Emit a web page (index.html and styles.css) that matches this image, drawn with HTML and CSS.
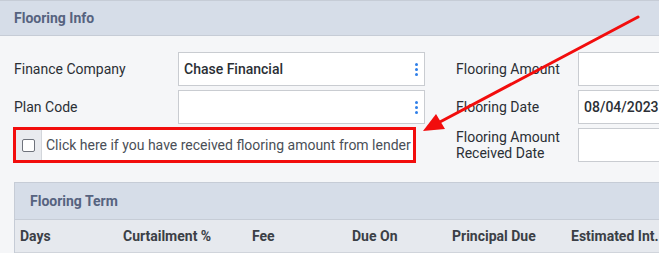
FILE: index.html
```html
<!DOCTYPE html>
<html lang="en">
<head>
    <meta charset="UTF-8">
    <meta name="viewport" content="width=device-width, initial-scale=1.0">
    <title>Flooring Info</title>
    <link rel="stylesheet" href="styles.css">
</head>
<body>
    <div class="page">
        <div class="panel-head">Flooring Info</div>

        <div class="form-grid">
            <label class="field-label">Finance Company</label>
            <div class="select-box">
                <span class="select-value">Chase Financial</span>
                <span class="kebab"><i></i><i></i><i></i></span>
            </div>
            <label class="field-label right">Flooring Amount</label>
            <div class="text-box"></div>

            <label class="field-label">Plan Code</label>
            <div class="select-box">
                <span class="select-value"></span>
                <span class="kebab"><i></i><i></i><i></i></span>
            </div>
            <label class="field-label right">Flooring Date</label>
            <div class="text-box">08/04/2023</div>

            <div class="check-row">
                <span class="check-addon"><span class="checkbox"></span></span>
                <span class="check-text">Click here if you have received flooring amount from lender</span>
            </div>
            <label class="field-label right two-line">Flooring Amount<br>Received Date</label>
            <div class="text-box"></div>
        </div>

        <div class="term-box">
            <div class="term-head">Flooring Term</div>
            <div class="term-cols">
                <span>Days</span>
                <span>Curtailment %</span>
                <span>Fee</span>
                <span>Due On</span>
                <span>Principal Due</span>
                <span>Estimated Int.</span>
            </div>
        </div>

        <!-- annotation arrow drawn over the form -->
        <svg class="arrow" width="659" height="253" viewBox="0 0 659 253">
            <line x1="638" y1="17" x2="438" y2="123" stroke="#f20d0d" stroke-width="3" stroke-linecap="round"/>
            <polygon points="423,131 436,114 445,129" fill="#f20d0d"/>
        </svg>
    </div>
</body>
</html>
```

FILE: styles.css
```css
body {
    margin: 0;
    background-color: #f5f6f8;
    font-family: Roboto, "Liberation Sans", Arial, sans-serif;
    color: #2e3238;
    overflow: hidden;
}
.page {
    position: relative;
    width: 659px;
    height: 253px;
    overflow: hidden;
}
.panel-head {
    height: 36px;
    box-sizing: border-box;
    border-top: 1px solid #c6ccd6;
    border-bottom: 1px solid #c6ccd6;
    background-color: #d6dde8;
    padding-left: 14px;
    line-height: 34px;
    font-size: 14px;
    font-weight: 700;
    color: #56637f;
}
.form-grid {
    display: grid;
    grid-template-columns: 164px 247px 153px 110px;
    grid-auto-rows: 34px;
    row-gap: 4px;
    align-items: center;
    padding: 16px 0 0 14px;
}
.field-label {
    font-size: 14px;
    color: #2b2f35;
}
.field-label.right {
    padding-left: 31px;
}
.two-line {
    line-height: 16px;
}
.select-box, .text-box {
    height: 34px;
    box-sizing: border-box;
    border: 1px solid #c9ccd1;
    background: #fff;
    display: flex;
    align-items: center;
    font-size: 14px;
    font-weight: 500;
    color: #2b2f35;
}
.select-box {
    justify-content: space-between;
    padding: 0 6px 0 5px;
}
.text-box {
    padding-left: 5px;
}
.kebab {
    display: flex;
    flex-direction: column;
    gap: 2px;
}
.kebab i {
    width: 3px;
    height: 3px;
    border-radius: 50%;
    background: #2f7fe8;
}
.check-row {
    grid-column: 1 / 3;
    align-self: start;
    width: 403px;
    height: 36px;
    margin-left: -1px;
    margin-top: -1px;
    box-sizing: border-box;
    border: 3px solid #f20d0d;
    display: flex;
    background: #fff;
}
.check-addon {
    width: 25px;
    background: #e9ebef;
    border-right: 1px solid #d3d6db;
    display: flex;
    align-items: center;
    justify-content: center;
}
.checkbox {
    width: 11px;
    height: 11px;
    border: 1.5px solid #6f737c;
    border-radius: 2px;
    background: #fff;
}
.check-text {
    padding-left: 4px;
    font-size: 14px;
    line-height: 30px;
    color: #4a4f57;
    white-space: nowrap;
}
.term-box {
    margin: 20px 0 0 14px;
    border-left: 1px solid #c6ccd6;
    border-top: 1px solid #c6ccd6;
}
.term-head {
    height: 37px;
    box-sizing: border-box;
    border-bottom: 1px solid #c6ccd6;
    background-color: #d6dde8;
    padding-left: 15px;
    line-height: 36px;
    font-size: 14px;
    font-weight: 700;
    color: #56637f;
}
.term-cols {
    display: grid;
    grid-template-columns: 103px 129px 100px 100px 119px 120px;
    height: 32px;
    align-items: center;
    padding-left: 5px;
    background-color: #e6e9ee;
    border-bottom: 1px solid #d0d4db;
    font-size: 14px;
    font-weight: 700;
    color: #3b3f46;
    white-space: nowrap;
}
.arrow {
    position: absolute;
    left: 0;
    top: 0;
    pointer-events: none;
}
```
